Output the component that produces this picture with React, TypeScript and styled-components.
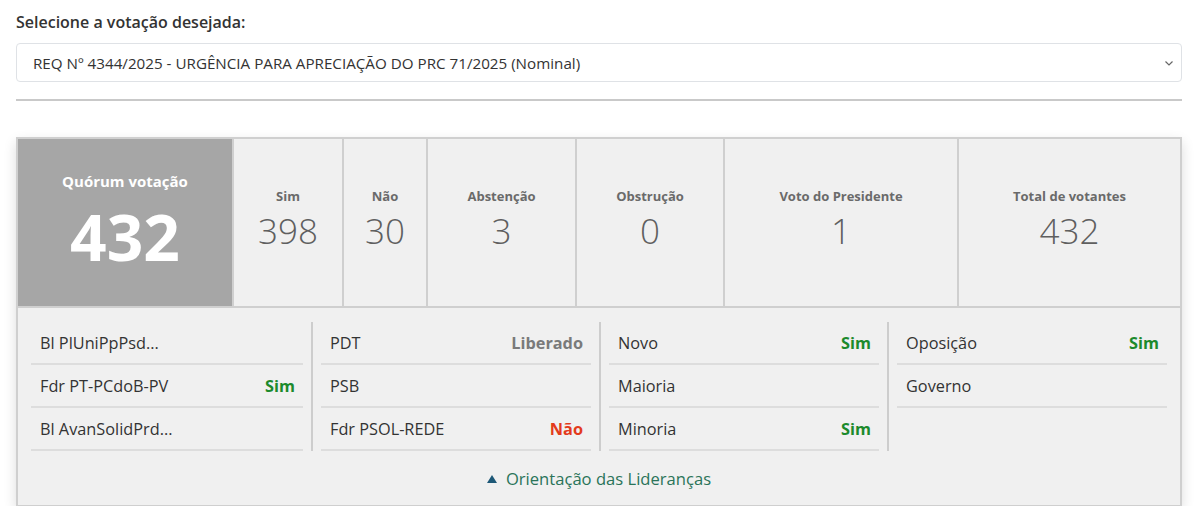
import React from "react";
import styled, { createGlobalStyle } from "styled-components";

const GlobalStyle = createGlobalStyle`
  * {
    box-sizing: border-box;
  }
  body {
    margin: 0;
    background: #ffffff;
    font-family: "Open Sans", "Liberation Sans", sans-serif;
    color: #333;
  }
`;

const Page = styled.div`
  padding: 10px 18px 0 16px;
`;

const Label = styled.label`
  display: block;
  font-size: 16px;
  font-weight: 600;
  line-height: 24px;
  color: #333;
  margin-bottom: 9px;
`;

const SelectWrap = styled.div`
  position: relative;
`;

const Select = styled.select`
  appearance: none;
  width: 100%;
  height: 39px;
  padding: 0 36px 0 16px;
  border: 1px solid #dfe2e6;
  border-radius: 4px;
  background: #fff;
  font-family: "Open Sans", "Liberation Sans", sans-serif;
  font-size: 15.2px;
  color: #333;
`;

const Chevron = styled.svg`
  position: absolute;
  right: 8px;
  top: 15px;
  pointer-events: none;
`;

const Rule = styled.hr`
  margin: 17px 0 0;
  border: 0;
  border-top: 2px solid #c9c9c9;
`;

const Board = styled.div`
  margin-top: 36px;
  border: 2px solid #cfcfcf;
  border-bottom-width: 1px;
  background: #f0f0f0;
  box-shadow: 0 5px 12px rgba(0, 0, 0, 0.14);
`;

const Stats = styled.div`
  display: grid;
  grid-template-columns: 214px 110px 84px 149px 148px 234px 1fr;
  border-bottom: 2px solid #cfcfcf;
`;

const Quorum = styled.div`
  background: #a6a6a6;
  height: 167px;
  padding-top: 31px;
  text-align: center;
  color: #fff;
`;

const QuorumLabel = styled.div`
  font-size: 15px;
  font-weight: 700;
  line-height: 22px;
`;

const QuorumValue = styled.div`
  font-size: 64px;
  font-weight: 700;
  line-height: 64px;
  margin-top: 13px;
`;

const Stat = styled.div`
  border-left: 2px solid #cfcfcf;
  padding-top: 48px;
  text-align: center;
  color: #666;
`;

const StatLabel = styled.div`
  font-size: 13px;
  font-weight: 700;
  line-height: 18px;
  color: #6a6a6a;
`;

const StatValue = styled.div`
  font-size: 35px;
  font-weight: 300;
  line-height: 44px;
  margin-top: 4px;
  color: #5f5f5f;
`;

const Leaders = styled.div`
  padding: 12px 13px 14px;
`;

const Columns = styled.div`
  display: grid;
  grid-template-columns: repeat(4, 1fr);
  margin: 0 -8px;
`;

const Column = styled.div<{ $first?: boolean }>`
  padding: 0 8px;
  border-left: ${(p) => (p.$first ? "none" : "2px solid #cdcdcd")};
  margin-top: 2px;
`;

const Row = styled.div`
  display: flex;
  justify-content: space-between;
  align-items: center;
  height: 43px;
  padding: 0 8px 0 9px;
  border-bottom: 2px solid #dddddd;
  font-size: 16.3px;
  color: #333;
`;

const Vote = styled.span<{ $tone: "sim" | "nao" | "lib" }>`
  font-weight: 700;
  color: ${(p) =>
    p.$tone === "sim" ? "#1c8a2c" : p.$tone === "nao" ? "#e33b1c" : "#7a7a7a"};
`;

const Toggle = styled.div`
  display: flex;
  justify-content: center;
  align-items: center;
  gap: 9px;
  margin-top: 16px;
  font-size: 16.6px;
  line-height: 24px;
  color: #2a7459;
`;

type VoteKind = "sim" | "nao" | "lib";

const stats = [
  { label: "Sim", value: 398 },
  { label: "Não", value: 30 },
  { label: "Abstenção", value: 3 },
  { label: "Obstrução", value: 0 },
  { label: "Voto do Presidente", value: 1 },
  { label: "Total de votantes", value: 432 },
];

const columns: { name: string; vote?: VoteKind }[][] = [
  [
    { name: "Bl PlUniPpPsd..." },
    { name: "Fdr PT-PCdoB-PV", vote: "sim" },
    { name: "Bl AvanSolidPrd..." },
  ],
  [
    { name: "PDT", vote: "lib" },
    { name: "PSB" },
    { name: "Fdr PSOL-REDE", vote: "nao" },
  ],
  [
    { name: "Novo", vote: "sim" },
    { name: "Maioria" },
    { name: "Minoria", vote: "sim" },
  ],
  [{ name: "Oposição", vote: "sim" }, { name: "Governo" }],
];

const voteText = { sim: "Sim", nao: "Não", lib: "Liberado" };

const App = () => {
  return (
    <Page>
      <GlobalStyle />
      <Label>Selecione a votação desejada:</Label>
      <SelectWrap>
        <Select defaultValue="req">
          <option value="req">
            REQ Nº 4344/2025 - URGÊNCIA PARA APRECIAÇÃO DO PRC 71/2025 (Nominal)
          </option>
        </Select>
        <Chevron width="10" height="10" viewBox="0 0 10 10">
          <path d="M1.5 3.5 L5 7 L8.5 3.5" fill="none" stroke="#666" strokeWidth="1.2" />
        </Chevron>
      </SelectWrap>
      <Rule />
      <Board>
        <Stats>
          <Quorum>
            <QuorumLabel>Quórum votação</QuorumLabel>
            <QuorumValue>432</QuorumValue>
          </Quorum>
          {stats.map((s) => (
            <Stat key={s.label}>
              <StatLabel>{s.label}</StatLabel>
              <StatValue>{s.value}</StatValue>
            </Stat>
          ))}
        </Stats>
        <Leaders>
          <Columns>
            {columns.map((col, i) => (
              <Column key={i} $first={i === 0}>
                {col.map((r) => (
                  <Row key={r.name}>
                    <span>{r.name}</span>
                    {r.vote && <Vote $tone={r.vote}>{voteText[r.vote]}</Vote>}
                  </Row>
                ))}
              </Column>
            ))}
          </Columns>
          <Toggle>
            <svg width="10" height="8" viewBox="0 0 10 8">
              <path d="M5 0 L10 8 L0 8 Z" fill="#1d5877" />
            </svg>
            Orientação das Lideranças
          </Toggle>
        </Leaders>
      </Board>
    </Page>
  );
};

export default App;
